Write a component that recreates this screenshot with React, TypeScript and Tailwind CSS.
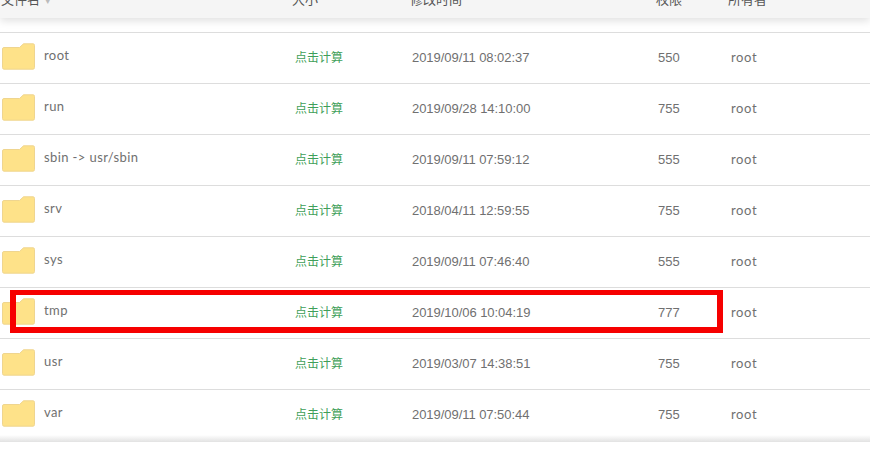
import React from 'react';

const files = [
  { name: 'root', time: '2019/09/11 08:02:37', mode: '550' },
  { name: 'run', time: '2019/09/28 14:10:00', mode: '755' },
  { name: 'sbin -> usr/sbin', time: '2019/09/11 07:59:12', mode: '555' },
  { name: 'srv', time: '2018/04/11 12:59:55', mode: '755' },
  { name: 'sys', time: '2019/09/11 07:46:40', mode: '555' },
  { name: 'tmp', time: '2019/10/06 10:04:19', mode: '777' },
  { name: 'usr', time: '2019/03/07 14:38:51', mode: '755' },
  { name: 'var', time: '2019/09/11 07:50:44', mode: '755' },
];

const FolderIcon: React.FC = () => (
  <svg width="33" height="27" viewBox="0 0 33 27" className="relative -top-[1px] shrink-0">
    <path
      d="M2 4.5 H17.5 L21.5 .8 H31 Q32.5 .8 32.5 2.3 V24.5 Q32.5 26.2 31 26.2 H2 Q.5 26.2 .5 24.5 V6 Q.5 4.5 2 4.5 Z"
      fill="#fee289"
      stroke="#efd58f"
      strokeWidth="1"
    />
  </svg>
);

const App: React.FC = () => {
  return (
    <div className="relative h-[459px] w-[870px] overflow-hidden bg-white font-['Liberation_Sans','Noto_Sans_CJK_SC',sans-serif] text-[13px] text-[#707070]">
      {/* Table head, scrolled mostly out of view */}
      <div className="-mt-[12px] flex h-[30px] items-end bg-[#f5f5f5] pb-[9px] text-[#555] shadow-[0_3px_8px_rgba(0,0,0,0.12)]">
        <span className="w-[292px] pl-[1px]">文件名 <span className="text-[8px] text-[#bbb]">▼</span></span>
        <span className="w-[118px]">大小</span>
        <span className="w-[246px]">修改时间</span>
        <span className="w-[72px]">权限</span>
        <span>所有者</span>
      </div>

      <div className="mt-[14px] border-t border-[#ddd]">
        {files.map(file => (
          <div key={file.name} className="flex h-[51px] items-center border-b border-[#ddd] pb-[1px]">
            <div className="flex w-[295px] items-center pl-[2px]">
              <FolderIcon />
              <span className="relative -top-[2px] ml-[9px] font-['Lato',sans-serif] text-[13px] tracking-[0.4px]">{file.name}</span>
            </div>
            <span className="w-[117px] text-[12px] text-[#3f9f5a]">点击计算</span>
            <span className="w-[246px] tracking-[-0.05px]">{file.time}</span>
            <span className="w-[73px]">{file.mode}</span>
            <span className="font-['Lato',sans-serif] tracking-[0.6px]">root</span>
          </div>
        ))}
      </div>

      <div className="h-[7px] -mt-[6px] bg-gradient-to-b from-white to-[#e2e2e2]" />

      {/* Red annotation box */}
      <div className="absolute left-[10px] top-[290px] h-[43px] w-[713px] border-[6px] border-t-[5px] border-[#f60000]" />
    </div>
  );
};

export default App;
